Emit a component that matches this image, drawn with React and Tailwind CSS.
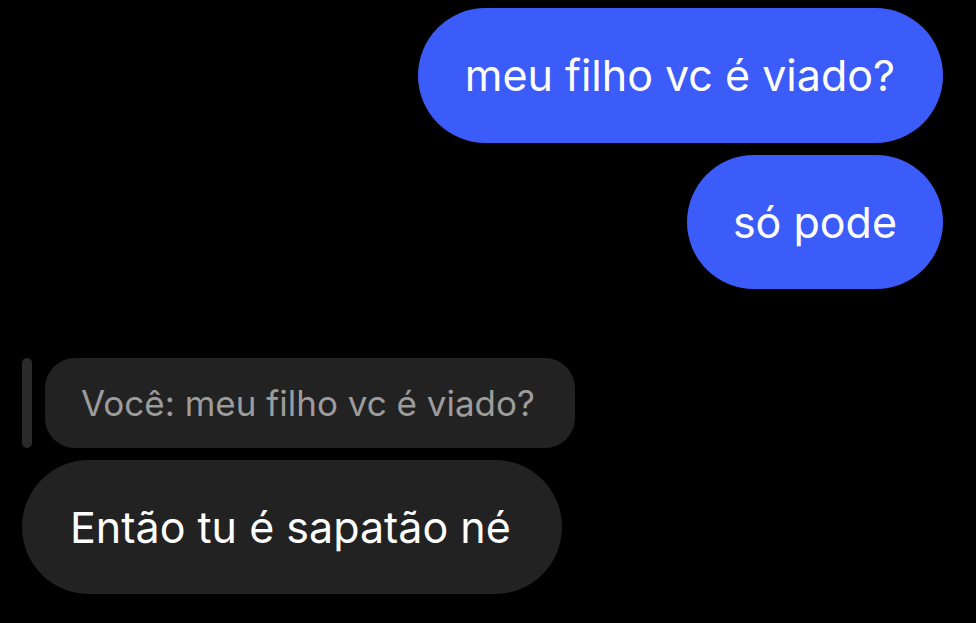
import React from 'react';

const font = { fontFamily: 'Inter, "Noto Sans", sans-serif' };

const App = () => {
    return (
        <div className="w-[976px] h-[623px] bg-black overflow-hidden flex flex-col" style={font}>
            {/* mensagens enviadas */}
            <div className="flex flex-col items-end pr-[33px] pt-[8px] gap-[12px]">
                <div className="h-[135px] pl-[47px] pr-[48px] flex items-center rounded-full bg-[#3b5cf9] text-white text-[43px] leading-none">
                    meu filho vc é viado?
                </div>
                <div className="h-[134px] px-[46px] flex items-center rounded-full bg-[#3b5cf9] text-white text-[43px] leading-none">
                    só pode
                </div>
            </div>

            {/* resposta */}
            <div className="flex flex-col items-start pl-[22px] mt-[69px] gap-[12px]">
                <div className="flex items-stretch gap-[13px]">
                    <div className="w-[10px] rounded-full bg-[#2a2a2a]" />
                    <div className="h-[90px] pl-[36px] pr-[40px] flex items-center rounded-[30px] bg-[#222222] text-[#9c9c9c] text-[35px] leading-none">
                        Você: meu filho vc é viado?
                    </div>
                </div>
                <div className="h-[134px] pl-[48px] pr-[51px] flex items-center rounded-full bg-[#222222] text-white text-[43px] leading-none">
                    Então tu é sapatão né
                </div>
            </div>
        </div>
    );
};

export default App;
